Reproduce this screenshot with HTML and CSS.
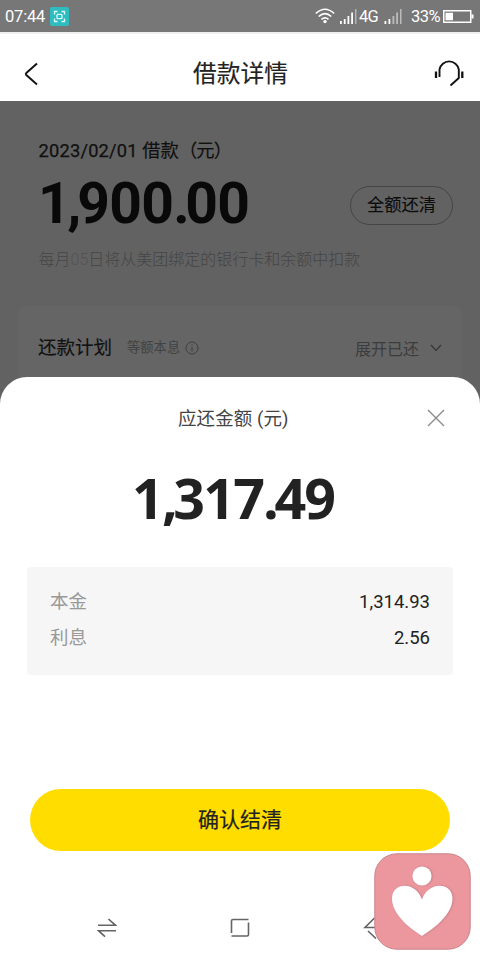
FILE: index.html
```html
<!DOCTYPE html>
<html lang="zh-CN">
<head>
<meta charset="utf-8">
<meta name="viewport" content="width=device-width, initial-scale=1">
<title>借款详情</title>
<link rel="stylesheet" href="styles.css">
</head>
<body>
<div class="phone">
  <div class="status">
    <span class="time">07:44</span>
    <svg class="scan" width="19" height="19" viewBox="0 0 19 19"><rect width="19" height="19" rx="2" fill="#2dbdc1"/><g fill="none" stroke="#dffafa" stroke-width="1.3"><path d="M4.5 7.5v-3h3M11.500 4.500h3v3M14.500 11.500v3h-3M7.500 14.500h-3v-3"/><rect x="7" y="7.300" width="5" height="4.400" rx="1"/></g></svg>
    <svg class="wifi" width="20" height="16" viewBox="0 0 20 16"><g fill="none" stroke="#fff" stroke-width="1.6"><path d="M.8 5.500q9.200-8.500 18.400 0M3.700 8.500q6.300-5.700 12.600 0M6.500 11.300q3.500-3 7 0"/></g><circle cx="10" cy="13.600" r="1.700" fill="#fff"/></svg>
    <svg class="bars" width="18" height="17" viewBox="0 0 18 17"><g fill="#fff"><path d="M1 13h1.800v3H1zM4.800 11h1.800v5H4.800zM8.500 8h1.800v8H8.500zM12.200 4.500h1.800V16h-1.800z"/><path d="M16.200 1h1.200v15h-1.200z" opacity=".55"/></g></svg>
    <span class="net">4G</span>
    <svg class="bars2" width="18" height="17" viewBox="0 0 18 17"><g fill="#fff"><path d="M.5 13h1.800v3H.5zM4.500 11h1.800v5H4.500z"/><path d="M8.500 8h1.800v8H8.500zM12.200 4.500h1.800V16h-1.800zM16 1h1.500v15H16z" opacity=".5"/></g></svg>
    <span class="pct">33%</span>
    <svg class="battery" width="31" height="13" viewBox="0 0 31 13"><path d="M.75.750h27v11.500h-27z" fill="none" stroke="#fff" stroke-width="1.500"/><path d="M2.500 2.700h7.500v7.600H2.500zM28.500 4.500h2v4h-2z" fill="#fff"/></svg>
  </div>
  <header class="nav">
    <svg width="16" height="24" viewBox="0 0 16 24"><path d="M14 1.500 3.300 11q-1 1 0 2L14 22.500" fill="none" stroke="#111" stroke-width="1.900"/></svg>
    <h1>借款详情</h1>
    <svg width="30" height="28" viewBox="0 0 30 28"><g fill="none" stroke="#111"><path d="M5.500 17v-7.500a9.800 9.800 0 0 1 19.300 0v8.500L16.500 25.500" stroke-width="1.900"/><path d="M2 11.500V18M28.300 11.500V18" stroke-width="2.300"/></g></svg>
  </header>
  <main class="loan">
    <div class="date"><span class="ymd">2023/02/01</span> 借款<span class="unit">（元）</span></div>
    <div class="total"><span class="amount"><span class="one">1</span><span class="comma">,</span>900<span class="dot">.</span>00</span><span class="payoff">全额还清</span></div>
    <div class="note">每月<span class="day">05</span>日将从美团绑定的银行卡和余额中扣款</div>
    <section class="plan">
      <h2>还款计划</h2>
      <span class="kind"><span>等额本息</span><svg width="14" height="14" viewBox="0 0 14 14"><circle cx="7" cy="7" r="6" fill="none" stroke="#3f3f3f"/><path d="M7 6v4.500M7 3.500v1.200" stroke="#3f3f3f"/></svg></span>
      <span class="expand">展开已还<svg width="12" height="8" viewBox="0 0 12 8"><path d="m1 1 5 5.300L11 1" fill="none" stroke="#343434" stroke-width="1.200"/></svg></span>
    </section>
  </main>
  <section class="sheet">
    <div class="sheet-head"><span>应还金额 (元)</span><svg width="18" height="18" viewBox="0 0 18 18"><path d="m1 1 16 16M17 1 1 17" stroke="#8b8b8b" stroke-width="1.400"/></svg></div>
    <div class="due">1<span class="due-comma">,</span>317<span class="due-dot">.</span>49</div>
    <dl class="detail">
      <div><dt>本金</dt><dd>1,314.93</dd></div>
      <div><dt>利息</dt><dd>2.56</dd></div>
    </dl>
    <button class="confirm">确认结清</button>
    <div class="keys">
      <svg width="20" height="20" viewBox="0 0 20 20"><path d="M1 7.300h17.500L11.500 1M19 12.700H1.500L8 18.700" fill="none" stroke="#646464" stroke-width="1.600"/></svg>
      <svg width="20" height="20" viewBox="0 0 20 20"><path d="M1.500 15V3q0-1.500 1.500-1.500h15.500M18.500 4.500v12q0 1.500-1.500 1.500H1.500" fill="none" stroke="#646464" stroke-width="1.600"/></svg>
      <svg width="20" height="22" viewBox="0 0 20 22"><path d="M11.500 1 2 10.500h17M5 14l8 7.500" fill="none" stroke="#646464" stroke-width="1.600"/></svg>
    </div>
  </section>
  <svg class="heart" width="97" height="97" viewBox="0 0 97 97"><rect x=".8" y=".8" width="95.400" height="95.400" rx="22" fill="#ec979e" stroke="#c98289" stroke-width="1"/><g class="figure" fill="#fff"><circle cx="48" cy="23" r="9.600"/><path d="M48 83C37 76 18 62 18 45.500 18 28.500 42 28 48 46.500 54 28 78.500 28.500 78.500 45.500 78.500 62 59 76 48 83z"/></g></svg>
</div>
</body>
</html>
```
FILE: styles.css
```css
* { box-sizing: border-box; }
body { margin: 0; font-family: Roboto, "Noto Sans CJK SC", sans-serif; }
h1, h2, dl, dt, dd { margin: 0; font-weight: 400; }
svg { display: block; flex: none; }
.phone { position: relative; width: 480px; height: 960px; overflow: hidden; background: #626262; }
.status { display: flex; align-items: center; height: 32px; padding-left: 5px; background: #777; color: #fff; font-size: 16.5px; line-height: 30px; white-space: nowrap; }
.status span { padding-top: 2px; }
.time { width: 45px; letter-spacing: -.2px; }
.wifi { margin-left: 246px; }
.bars { margin-left: 4px; }
.status .net { width: 27px; padding-left: 2px; letter-spacing: -.8px; }
.pct { width: 32px; margin-left: 9px; letter-spacing: -.5px; }
.nav { display: flex; align-items: center; justify-content: space-between; height: 69px; padding: 12px 16px 0 23px; background: #fff; border-top: 2px solid #f0f0f0; }
.nav h1 { margin-left: 8px; color: #222; font-size: 23.7px; line-height: 40px; -webkit-text-stroke: .15px #222; }
.loan { padding: 35px 18px 0; background: #626262; }
.date { padding-left: 20.5px; color: #101010; font-size: 18.3px; line-height: 30px; -webkit-text-stroke: .15px #101010; }
.ymd { letter-spacing: .2px; -webkit-text-stroke: .25px #101010; }
.unit { letter-spacing: -.8px; }
.total { display: flex; align-items: center; justify-content: space-between; height: 78px; padding: 0 9px 0 20px; }
.amount { color: #090909; font-size: 57px; line-height: 76px; padding-bottom: 2px; font-weight: 700; letter-spacing: -.7px; }
.one { letter-spacing: -3.500px; }
.comma { letter-spacing: -4px; }
.dot { letter-spacing: -4.500px; }
.payoff { width: 103px; height: 39px; border: 1px solid #454545; border-radius: 20px; text-align: center; color: #0c0c0c; font-size: 17.3px; line-height: 37px; -webkit-text-stroke: .1px #0c0c0c; }
.note { padding: 1px 0 0 20.5px; color: #454545; font-size: 16px; line-height: 30px; font-weight: 300; white-space: nowrap; }
.day { color: #535353; }
.plan { display: flex; align-items: center; height: 90px; margin-top: 31px; padding: 0 20px 6px; background: #656565; border-radius: 8px; }
.plan h2 { color: #111; font-size: 18.5px; line-height: 30px; -webkit-text-stroke: .15px #111; }
.kind { display: flex; align-items: center; gap: 5px; margin-left: 15px; color: #424242; font-size: 13.3px; }
.kind span { padding-bottom: 4px; }
.expand { display: flex; align-items: center; gap: 11px; margin-left: auto; color: #3c3c3c; font-size: 16px; }
.sheet { position: absolute; left: 0; right: 0; top: 377px; height: 583px; padding: 26px 27px 0; background: #fff; border-radius: 27px 27px 0 0; }
.sheet-head { display: flex; align-items: center; justify-content: space-between; height: 30px; padding: 0 8px 0 151px; color: #444; font-size: 18.5px; line-height: 30px; }
.sheet-head span { padding-top: 2px; letter-spacing: .1px; }
.due { height: 80px; margin: 27px 0 27px; padding-left: 105px; color: #222; font: 700 55.5px/76px "Open Sans", sans-serif; letter-spacing: -1.8px; }
.due-comma, .due-dot { letter-spacing: -4.500px; }
.detail { height: 108px; padding: 17px 23px; background: #f6f6f6; border-radius: 4px; }
.detail div { display: flex; justify-content: space-between; height: 36px; line-height: 36px; font-size: 18.5px; }
.detail dt { color: #999; }
.detail dd { color: #222; }
.confirm { display: block; width: 420px; height: 62px; margin: 114px 0 0 3px; padding: 0 0 1px; border: 0; border-radius: 31px; background: #ffdd00; color: #222; font: 400 21px/58px Roboto, "Noto Sans CJK SC", sans-serif; -webkit-text-stroke: .2px #222; }
.keys { display: flex; align-items: center; gap: 113px; height: 30px; margin-top: 62px; padding-left: 70px; }
.heart { position: absolute; left: 373.500px; top: 853px; }
.figure { filter: drop-shadow(1px 0 1px #c47f86); }
```
